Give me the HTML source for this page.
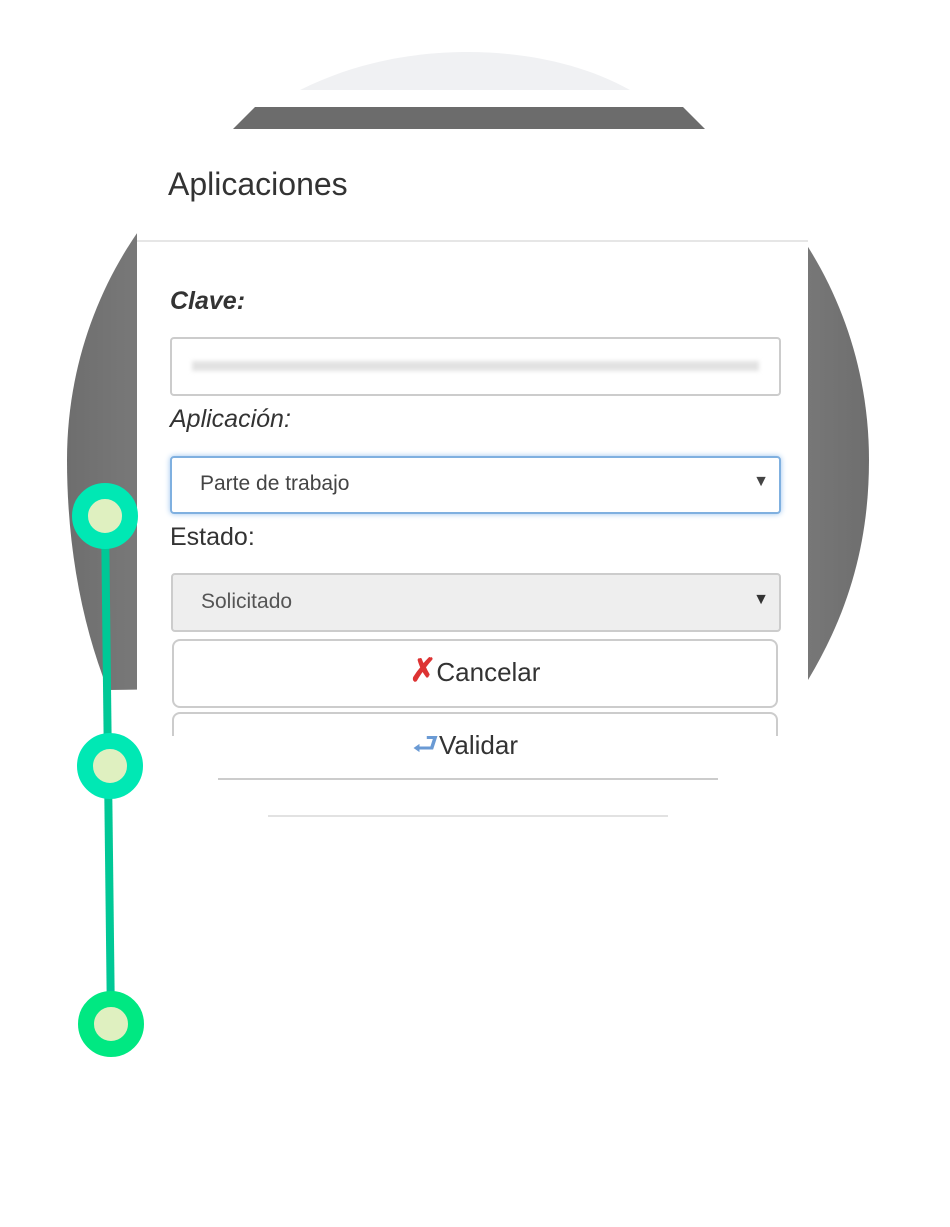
<!DOCTYPE html>
<html><head><meta charset="utf-8"><style>
body{margin:0;width:950px;height:1227px;background:#fff;position:relative;overflow:hidden;font-family:"Liberation Sans",sans-serif}
.a{position:absolute}
.lbl{color:#333;font-size:25px}
.box{position:absolute;border:2px solid #ccc;border-radius:4px;box-sizing:border-box}
</style></head><body>
<svg class="a" style="left:0;top:0" width="950" height="1227">
<defs><linearGradient id="g" x1="0" x2="1"><stop offset="0" stop-color="#6e6e6e"/><stop offset="0.1" stop-color="#7a7a7a"/><stop offset="0.9" stop-color="#7a7a7a"/><stop offset="1" stop-color="#6e6e6e"/></linearGradient></defs>
<path d="M108 690 C80 620 67 540 67 460 C67 238 246 59 468 59 C690 59 869 238 869 460 C869 540 850 610 808 680 Z" fill="url(#g)"/>
<path d="M300 90 C360 60 420 52 468 52 C520 52 580 62 630 90 Z" fill="#f0f1f3"/>
<rect x="0" y="90" width="950" height="17" fill="#fff"/>
<path d="M233 129 L255 107 L683 107 L705 129 Z" fill="#6c6c6c"/>
<rect x="0" y="129" width="950" height="100" fill="#fff"/>
<path d="M0 129 H233 L137 230 H0 Z" fill="#fff"/>
<rect x="137" y="129" width="671" height="620" fill="#fff"/>
<rect x="137" y="240" width="671" height="2" fill="#e6e6e6"/>
<rect x="218" y="778" width="500" height="2" fill="#ccc"/>
<rect x="268" y="815" width="400" height="2" fill="#e2e2e2"/>
</svg>
<div class="a" style="left:168px;top:166px;font-size:32px;color:#333">Aplicaciones</div>
<div class="a lbl" style="left:170px;top:287px;font-weight:bold;font-style:italic">Clave:</div>
<div class="box" style="left:170px;top:337px;width:611px;height:59px"><div style="margin:22px 20px;height:10px;background:#e2e2e2;filter:blur(2px)"></div></div>
<div class="a lbl" style="left:170px;top:405px;font-style:italic">Aplicación:</div>
<div class="box" style="left:170px;top:456px;width:611px;height:58px;border-color:#7fb0e0;box-shadow:0 0 6px #9cc4ee;font-size:21px;color:#444;padding:14px 28px">Parte de trabajo<span style="position:absolute;right:10px;top:15px;font-size:16px">▼</span></div>
<div class="a lbl" style="left:170px;top:523px">Estado:</div>
<div class="box" style="left:171px;top:573px;width:610px;height:59px;background:#eee;font-size:21px;color:#555;padding:15px 28px">Solicitado<span style="position:absolute;right:10px;top:16px;font-size:16px;color:#333">▼</span></div>
<div class="box" style="left:172px;top:639px;width:606px;height:69px;border-radius:8px;text-align:center;font-size:26px;color:#333;padding-top:16px"><span style="color:#d33;font-weight:bold;font-size:32px;line-height:26px">✗</span>Cancelar</div>
<div class="box" style="left:172px;top:712px;width:606px;height:24px;border-bottom:none;border-radius:8px 8px 0 0"></div>
<div class="a" style="left:412px;top:722px;font-size:26px;color:#333"><span style="color:#6a9ad4;font-size:30px">⮐</span>Validar</div>
<svg class="a" style="left:0;top:0" width="950" height="1227">
<line x1="105" y1="516" x2="111" y2="1024" stroke="#00c896" stroke-width="8"/>
<circle cx="105" cy="516" r="25" fill="#dff0c0" stroke="#00e8b4" stroke-width="16"/>
<circle cx="110" cy="766" r="25" fill="#dff0c0" stroke="#00e8b4" stroke-width="16"/>
<circle cx="111" cy="1024" r="25" fill="#dff0c0" stroke="#00e882" stroke-width="16"/>
</svg>
</body></html>
